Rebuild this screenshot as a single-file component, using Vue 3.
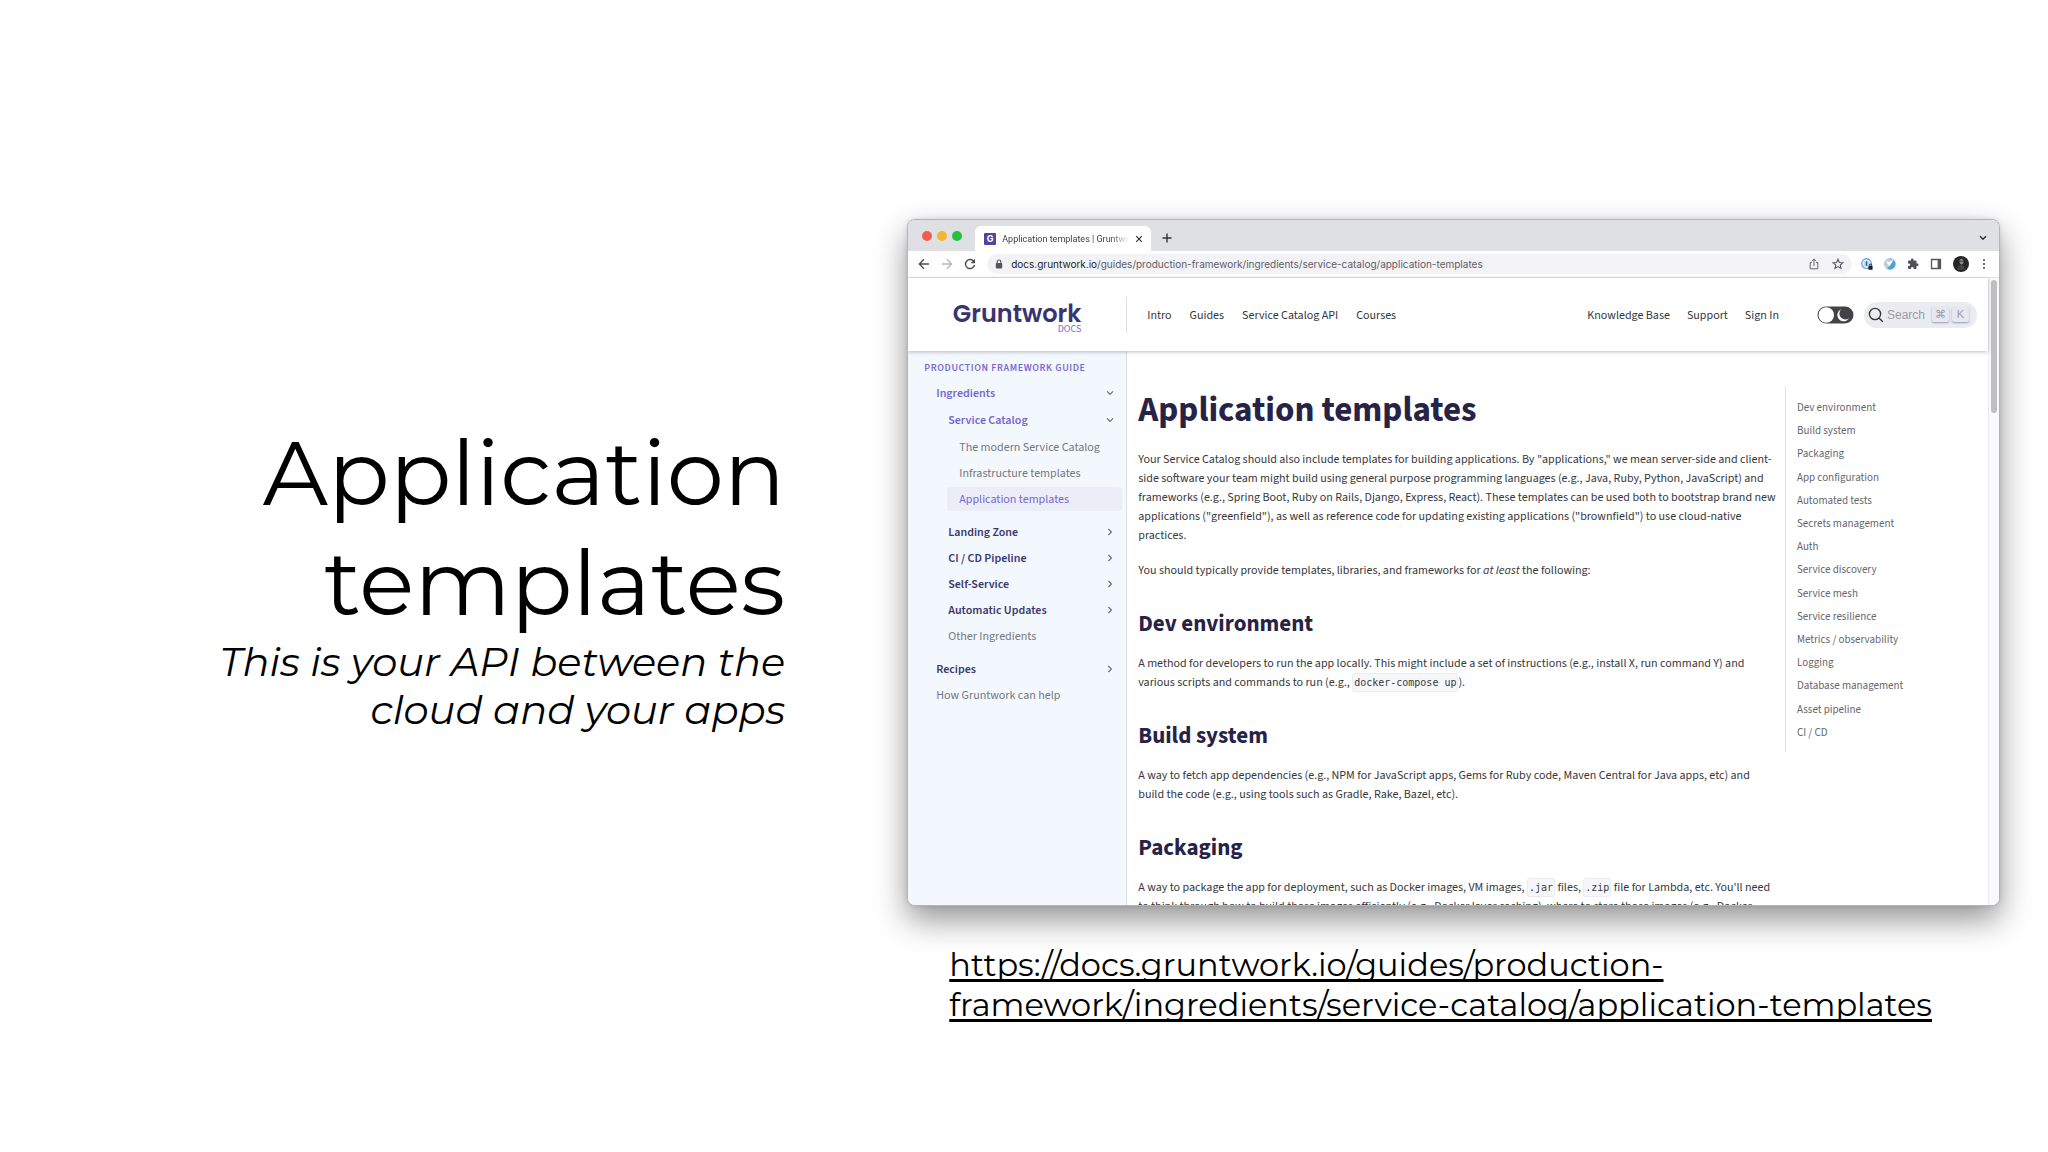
<script setup>
const url = 'https://docs.gruntwork.io/guides/production-framework/ingredients/service-catalog/application-templates'

const mainLinks = ['Intro', 'Guides', 'Service Catalog API', 'Courses']
const sideLinks = ['Knowledge Base', 'Support', 'Sign In']

const menu = [
  { label: 'Ingredients', level: 1, kind: 'open' },
  { label: 'Service Catalog', level: 2, kind: 'open' },
  { label: 'The modern Service Catalog', level: 3, kind: 'leaf' },
  { label: 'Infrastructure templates', level: 3, kind: 'leaf' },
  { label: 'Application templates', level: 3, kind: 'leaf', active: true, last: true },
  { label: 'Landing Zone', level: 2, kind: 'closed' },
  { label: 'CI / CD Pipeline', level: 2, kind: 'closed' },
  { label: 'Self-Service', level: 2, kind: 'closed' },
  { label: 'Automatic Updates', level: 2, kind: 'closed' },
  { label: 'Other Ingredients', level: 2, kind: 'leaf', last: true },
  { label: 'Recipes', level: 1, kind: 'closed' },
  { label: 'How Gruntwork can help', level: 1, kind: 'leaf' },
]

const toc = [
  'Dev environment', 'Build system', 'Packaging', 'App configuration', 'Automated tests',
  'Secrets management', 'Auth', 'Service discovery', 'Service mesh', 'Service resilience',
  'Metrics / observability', 'Logging', 'Database management', 'Asset pipeline', 'CI / CD',
]
</script>

<template>
  <main class="slide">
    <section class="intro">
      <h1>Application templates</h1>
      <p>This is your API between the cloud and your apps</p>
    </section>

    <section class="demo">
      <div class="window">
        <div class="tabs">
          <div class="lights"><i class="red"></i><i class="amber"></i><i class="green"></i></div>
          <div class="tab">
            <span class="favicon">G</span>
            <span class="tab-title">Application templates | Gruntwork</span>
            <button class="icon" aria-label="Close tab">
              <svg width="8" height="8" viewBox="0 0 8 8"><path d="M1.2 1.2l5.6 5.6M6.8 1.2L1.2 6.8" stroke="#333" stroke-width="1.2" /></svg>
            </button>
          </div>
          <button class="icon plus" aria-label="New tab">
            <svg width="10" height="10" viewBox="0 0 10 10"><path d="M5 .5v9M.5 5h9" stroke="#333" stroke-width="1.4" /></svg>
          </button>
          <button class="icon tab-search" aria-label="Search tabs">
            <svg width="10" height="10" viewBox="0 0 10 10"><path d="M2 3.2l3 3 3-3" fill="none" stroke="#333" stroke-width="1.5" /></svg>
          </button>
        </div>

        <div class="toolbar">
          <button class="icon" aria-label="Back">
            <svg width="12" height="12" viewBox="0 0 12 12"><path d="M11 6H1.5M6 1.2L1.3 6 6 10.8" fill="none" stroke="#4b4c50" stroke-width="1.3" /></svg>
          </button>
          <button class="icon" aria-label="Forward">
            <svg width="12" height="12" viewBox="0 0 12 12"><path d="M1 6h9.5M6 1.2L10.7 6 6 10.8" fill="none" stroke="#b5b6ba" stroke-width="1.3" /></svg>
          </button>
          <button class="icon" aria-label="Reload">
            <svg width="12" height="12" viewBox="0 0 12 12"><path d="M10 3.6A4.6 4.6 0 1 0 10.6 7" fill="none" stroke="#4b4c50" stroke-width="1.4" /><path d="M11 .8v4.4H6.6z" fill="#4b4c50" /></svg>
          </button>
          <div class="omnibox">
            <svg width="8" height="10" viewBox="0 0 8 10"><rect x=".8" y="4" width="6.4" height="5.4" rx=".8" fill="#54565b" /><path d="M2.2 4.2V2.8a1.8 1.8 0 0 1 3.6 0v1.4" fill="none" stroke="#54565b" stroke-width="1.1" /></svg>
            <span class="address"><b>docs.gruntwork.io</b>/guides/production-framework/ingredients/service-catalog/application-templates</span>
            <button class="icon" aria-label="Share">
              <svg width="12" height="12" viewBox="0 0 12 12"><path d="M4 4.4H2.2v6.4h7.6V4.4H8M6 8V1.2M3.9 3L6 1l2.1 2" fill="none" stroke="#66686d" stroke-width="1" /></svg>
            </button>
            <button class="icon" aria-label="Bookmark">
              <svg width="12" height="12" viewBox="0 0 12 12"><path d="M6 1.3L7.4 4.500l3.400.3-2.600 2.200.8 3.400-3-1.800-3 1.800.8-3.400L1.200 4.800l3.400-.3z" fill="none" stroke="#55575c" stroke-width="1.100" /></svg>
            </button>
          </div>
          <button class="icon" aria-label="Password manager">
            <svg width="12" height="12" viewBox="0 0 13 13"><circle cx="6" cy="6" r="5.200" fill="#fff" stroke="#6aa2e0" stroke-width="1.400" /><circle cx="6" cy="6" r="3.500" fill="#c3daf5" /><rect x="5.200" y="3.600" width="1.600" height="4.800" rx=".6" fill="#2b5fae" /><rect x="8" y="8.800" width="4.600" height="3.800" rx=".6" fill="#222" /><path d="M9 9V7.900a1.300 1.300 0 0 1 2.600 0V9" fill="none" stroke="#222" /></svg>
          </button>
          <button class="icon" aria-label="Extension">
            <svg width="12" height="12" viewBox="0 0 12 12"><circle cx="6" cy="6" r="5.700" fill="#4ba3dc" /><path d="M.6 8A5.700 5.700 0 0 1 3.500.9l6 .4L3.200 10.900A5.700 5.700 0 0 1 .6 8z" fill="#c5cbd3" /><path d="M2.400 2.400l2.200 1.800 5.200-2.400-4.400 6.400L3.600 6z" fill="#fff" /></svg>
          </button>
          <button class="icon" aria-label="Extensions">
            <svg width="12" height="12" viewBox="0 0 24 24"><path d="M20.500 11H19V7a2 2 0 0 0-2-2h-4V3.500a2.500 2.500 0 0 0-5 0V5H4a2 2 0 0 0-2 2v3.800h1.500a2.700 2.700 0 0 1 0 5.400H2V20a2 2 0 0 0 2 2h3.800v-1.500a2.700 2.700 0 0 1 5.400 0V22H17a2 2 0 0 0 2-2v-4h1.500a2.500 2.500 0 0 0 0-5z" fill="#505257" /></svg>
          </button>
          <button class="icon" aria-label="Side panel">
            <svg width="12" height="12" viewBox="0 0 12 12"><path d="M1.500 1.500h9v9h-9z" fill="#fff" stroke="#55575c" stroke-width="1.300" /><path d="M7.600 1.500h3v9h-3z" fill="#55575c" /></svg>
          </button>
          <button class="icon profile" aria-label="Profile">
            <svg width="16" height="16" viewBox="0 0 16 16"><circle cx="8" cy="8" r="8" fill="#262627" /><ellipse cx="8.500" cy="5.600" rx="2" ry="2.800" fill="#8c8c8c" /><path d="M6.500 5.200h4" stroke="#333" /><path d="M4.500 14c0-4 1.800-5 4-5s3 2 3 4.500" fill="#424243" /></svg>
          </button>
          <button class="icon" aria-label="Menu">
            <svg width="4" height="12" viewBox="0 0 4 12"><g fill="#55575c"><circle cx="2" cy="2" r="1.100" /><circle cx="2" cy="6" r="1.100" /><circle cx="2" cy="10" r="1.100" /></g></svg>
          </button>
        </div>

        <div class="viewport">
          <div class="page">
            <header class="navbar">
              <a href="#" class="brand"><span class="name">Gruntwork</span><span class="docs">DOCS</span></a>
              <nav class="links main-links">
                <a v-for="l in mainLinks" :key="l" href="#">{{ l }}</a>
              </nav>
              <nav class="links side-links">
                <a v-for="l in sideLinks" :key="l" href="#">{{ l }}</a>
              </nav>
              <button class="toggle" aria-label="Dark mode">
                <svg width="37" height="18" viewBox="0 0 37 18"><rect x=".5" y=".5" width="36" height="17" rx="8.500" fill="#434347" /><circle cx="9.300" cy="9" r="7.800" fill="#fff" /><path d="M24.300 3.300a6.200 6.200 0 1 0 7.800 8.600 5.600 5.600 0 0 1-7.800-8.600z" fill="#fff" /></svg>
              </button>
              <button class="search">
                <svg width="16" height="16" viewBox="0 0 16 16"><circle cx="7" cy="7" r="5.600" fill="none" stroke="#35363b" stroke-width="1.400" /><path d="M11 11l3.800 3.800" stroke="#35363b" stroke-width="1.400" /></svg>
                <span>Search</span>
                <kbd>⌘</kbd><kbd>K</kbd>
              </button>
            </header>

            <div class="columns">
              <aside class="sidebar">
                <h2>PRODUCTION FRAMEWORK GUIDE</h2>
                <ul>
                  <li v-for="m in menu" :key="m.label" :class="['level' + m.level, m.kind, { last: m.last }]">
                    <a href="#" :class="{ active: m.active }">
                      <span>{{ m.label }}</span>
                      <svg v-if="m.kind !== 'leaf'" class="chevron" width="8" height="8" viewBox="0 0 8 8"><path d="M2.400 1l3 3-3 3" fill="none" stroke="#6d6f78" stroke-width="1.200" /></svg>
                    </a>
                  </li>
                </ul>
              </aside>

              <article>
                <h1>Application templates</h1>
                <p>Your Service Catalog should also include templates for building applications. By "applications," we mean server-side and client-side software your team might build using general purpose programming languages (e.g., Java, Ruby, Python, JavaScript) and frameworks (e.g., Spring Boot, Ruby on Rails, Django, Express, React). These templates can be used both to bootstrap brand new applications ("greenfield"), as well as reference code for updating existing applications ("brownfield") to use cloud-native practices.</p>
                <p>You should typically provide templates, libraries, and frameworks for <em>at least</em> the following:</p>
                <h2>Dev environment</h2>
                <p>A method for developers to run the app locally. This might include a set of instructions (e.g., install X, run command Y) and various scripts and commands to run (e.g., <code>docker-compose up</code>).</p>
                <h2>Build system</h2>
                <p>A way to fetch app dependencies (e.g., NPM for JavaScript apps, Gems for Ruby code, Maven Central for Java apps, etc) and build the code (e.g., using tools such as Gradle, Rake, Bazel, etc).</p>
                <h2>Packaging</h2>
                <p>A way to package the app for deployment, such as Docker images, VM images, <code>.jar</code> files, <code>.zip</code> file for Lambda, etc. You'll need to think through how to build these images efficiently (e.g., Docker layer caching), where to store those images (e.g., Docker</p>
              </article>

              <nav class="toc">
                <a v-for="t in toc" :key="t" href="#">{{ t }}</a>
              </nav>
            </div>
          </div>
          <div class="scrollbar"><div class="thumb"></div></div>
        </div>
      </div>

      <a class="source" :href="url">{{ url }}</a>
    </section>
  </main>
</template>

<style>
body {
  margin: 0;
  background: #fff;
}
</style>

<style scoped>
* {
  box-sizing: border-box;
}
h1, h2, p, ul {
  margin: 0;
  padding: 0;
}
a {
  color: inherit;
  text-decoration: none;
}
button {
  border: 0;
  padding: 0;
  background: none;
  font: inherit;
}
svg {
  display: block;
  flex: none;
}

.slide {
  display: grid;
  grid-template-columns: 786fr 1091fr;
  column-gap: 6%;
  padding-right: 48px;
  min-height: 100vh;
  font-family: Montserrat, Inter, sans-serif;
  color: #000;
}
.intro {
  align-self: center;
  padding: 0 2px 0 200px;
  text-align: right;
}
.intro h1 {
  font-size: 91px;
  line-height: 110px;
  font-weight: 400;
}
.intro p {
  font-size: 40px;
  line-height: 48px;
  font-style: italic;
}

.demo {
  padding-top: 219px;
}
.window {
  display: flex;
  flex-direction: column;
  aspect-ratio: 1091 / 686;
  overflow: hidden;
  border: 1px solid #b4b5b8;
  border-radius: 8px;
  background: #fff;
  box-shadow: 0 14px 32px rgba(0, 0, 0, 0.42), 0 0 5px rgba(0, 0, 0, 0.12);
  font-family: "Source Sans 3", "Noto Sans CJK SC", sans-serif;
}
.source {
  display: block;
  margin: 39px 24px 0 42px;
  font-size: 32px;
  line-height: 40px;
  text-decoration: underline;
  text-decoration-thickness: 3px;
  text-decoration-skip-ink: none;
  text-underline-offset: 3px;
}

/* browser chrome */
.icon {
  display: flex;
}
.tabs {
  display: flex;
  align-items: flex-end;
  height: 31px;
  flex: none;
  padding-right: 11px;
  background: #dfe0e4;
}
.lights {
  display: flex;
  gap: 5px;
  width: 67px;
  padding: 0 0 10px 14px;
}
.lights i {
  width: 10px;
  height: 10px;
  border-radius: 50%;
}
.red { background: #f45b53; }
.amber { background: #f3b62f; }
.green { background: #24c23e; }
.tab {
  display: flex;
  align-items: center;
  gap: 6px;
  width: 176px;
  height: 25px;
  padding: 0 8px 0 9px;
  border-radius: 6px 6px 0 0;
  background: #fff;
  font-family: Roboto, sans-serif;
  font-size: 9px;
  color: #3c3d41;
}
.favicon {
  width: 12px;
  height: 12px;
  border-radius: 1px;
  background: #52449f;
  color: #fff;
  font: 700 9px/12px Inter, sans-serif;
  text-align: center;
}
.tab-title {
  flex: 1;
  overflow: hidden;
  white-space: nowrap;
  mask-image: linear-gradient(90deg, #000 85%, transparent);
}
.plus {
  margin: 0 auto 8px 11px;
}
.tab-search {
  margin-bottom: 8px;
}
.toolbar {
  display: flex;
  align-items: center;
  gap: 11px;
  height: 27px;
  flex: none;
  padding: 0 13px 0 10px;
  border-bottom: 1px solid #e0e1e6;
}
.omnibox {
  display: flex;
  align-items: center;
  gap: 12px;
  flex: 1;
  height: 20px;
  margin-right: -2px;
  padding: 0 8px;
  border-radius: 10px;
  background: #f2f2f7;
}
.address {
  flex: 1;
  margin-left: -4px;
  font: 10px/20px Inter, sans-serif;
  color: #5e6065;
}
.address b {
  font-weight: 400;
  color: #1d1e20;
}
.profile {
  margin-right: 2px;
}

/* documentation page */
.viewport {
  display: flex;
  flex: 1;
  min-height: 0;
}
.page {
  display: flex;
  flex-direction: column;
  flex: 1;
  min-width: 0;
}
.scrollbar {
  width: 11px;
  padding: 2px;
  border-left: 1px solid #ececf0;
  background: #fafafc;
}
.thumb {
  width: 6px;
  height: 133px;
  border-radius: 3px;
  background: #bfbfc2;
}
.navbar {
  position: relative;
  display: flex;
  align-items: center;
  height: 73px;
  flex: none;
  padding-right: 11px;
  background: #fff;
  box-shadow: 0 1px 4px rgba(0, 0, 0, 0.25);
}
.brand {
  display: flex;
  flex-direction: column;
  align-items: flex-end;
  width: 219px;
  height: 36px;
  padding-right: 45px;
  border-right: 1px solid #dfe1e8;
  color: #38346f;
}
.name {
  font: 600 24px/34px Poppins, Inter, sans-serif;
}
.docs {
  margin-top: -6px;
  font-size: 10px;
  line-height: 8px;
  color: #7a6cc8;
}
.links {
  display: flex;
  gap: 18px;
  padding-top: 2px;
  font-size: 12px;
  color: #35363a;
}
.main-links {
  margin: 0 auto 0 20px;
}
.side-links {
  gap: 17px;
}
.toggle {
  margin: 0 10px 0 38px;
}
.search {
  display: flex;
  align-items: center;
  gap: 3px;
  height: 26px;
  padding: 0 8px 0 4px;
  border-radius: 13px;
  background: #ebecf1;
  font: 12px "Liberation Sans", sans-serif;
  color: #9a9ca6;
}
.search span {
  margin: 0 4px 0 0;
}
.search kbd {
  width: 17px;
  height: 15px;
  border-radius: 2px;
  background: #e6e8f1;
  box-shadow: 0 1px 2px #9a9cb4;
  font: 11px/15px "Liberation Sans", "DejaVu Sans", sans-serif;
  text-align: center;
}
.columns {
  display: flex;
  flex: 1;
  min-height: 0;
}
.sidebar {
  width: 219px;
  flex: none;
  padding: 7px 4px 0 16px;
  border-right: 1px solid #dcdfe6;
  background: #f3f7fe;
}
.sidebar h2 {
  font-size: 10px;
  line-height: 20px;
  font-weight: 600;
  letter-spacing: 0.06em;
  color: #7a6cd0;
}
.sidebar ul {
  margin-top: 3px;
  list-style: none;
}
.sidebar li {
  padding-bottom: 2px;
}
.sidebar li.open {
  padding-bottom: 3px;
}
.sidebar li.last {
  padding-bottom: 9px;
}
.level2 { margin-left: 12px; }
.level3 { margin-left: 23px; }
.sidebar li a {
  display: flex;
  align-items: center;
  justify-content: space-between;
  height: 24px;
  padding: 0 8px 0 12px;
  font-size: 12px;
  color: #74777d;
}
.closed span {
  font-weight: 600;
  color: #3c386c;
}
.open span {
  font-weight: 600;
  color: #7668d0;
}
.open .chevron {
  transform: rotate(90deg);
}
.sidebar li a.active {
  border-radius: 3px;
  background: #ebeef7;
  color: #7668d0;
}

article {
  flex: 1;
  min-width: 0;
  padding: 37px 7px 0 11px;
  font-size: 12px;
  line-height: 19px;
  color: #36373b;
}
article h1 {
  margin-bottom: 18px;
  font-size: 35px;
  line-height: 44px;
  color: #272347;
}
article h2 {
  margin: 26px 0 12px;
  font-size: 23px;
  line-height: 36px;
  color: #272347;
}
article p {
  margin-bottom: 15px;
}
article h1 + p {
  margin-bottom: 16px;
}
code {
  padding: 3px 1px;
  border: 1px solid #ebecef;
  border-radius: 3px;
  background: #f6f7f8;
  font: 10px "DejaVu Sans Mono", monospace;
}
.toc {
  display: flex;
  flex-direction: column;
  justify-content: space-between;
  width: 203px;
  height: 366px;
  flex: none;
  margin-top: 35px;
  padding: 12px 0 9px 11px;
  border-left: 1px solid #dfe2e9;
  font-size: 11px;
  line-height: 20px;
  color: #65676c;
}
</style>
